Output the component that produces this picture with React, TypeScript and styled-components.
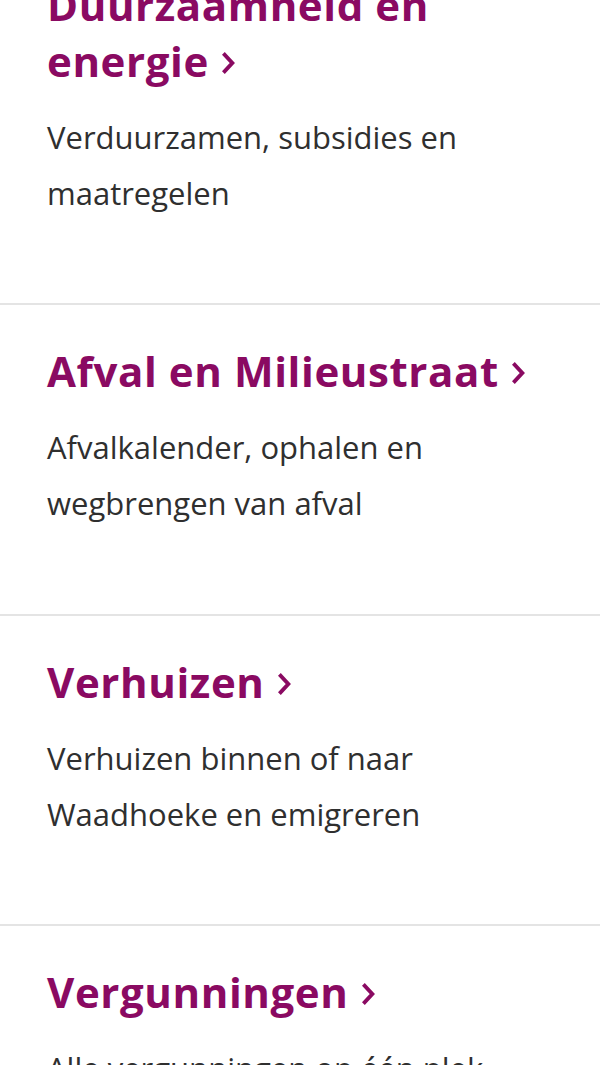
import * as React from 'react';
import styled, { createGlobalStyle } from 'styled-components';

interface Topic {
  title: string
  description: string
}

const topics: Topic[] = [
  { title: 'Duurzaamheid en energie', description: 'Verduurzamen, subsidies en maatregelen' },
  { title: 'Afval en Milieustraat', description: 'Afvalkalender, ophalen en wegbrengen van afval' },
  { title: 'Verhuizen', description: 'Verhuizen binnen of naar Waadhoeke en emigreren' },
  { title: 'Vergunningen', description: 'Alle vergunningen op één plek' },
];

const Chevron = () => (
  <ChevronIcon viewBox="0 0 12 20" aria-hidden="true">
    <path d="M2.5 2.5 L9.5 10 L2.5 17.5" />
  </ChevronIcon>
);

export default function App() {
  return (
    <>
      <GlobalStyle />
      <TopicList>
        {topics.map((t, i) => (
          <TopicItem key={`${t.title}_${i}`}>
            <TopicLink href="#">
              {t.title}
              <Nowrap>&nbsp;<Chevron /></Nowrap>
            </TopicLink>
            <Description>{t.description}</Description>
          </TopicItem>
        ))}
      </TopicList>
    </>
  );
}

const GlobalStyle = createGlobalStyle`
  html, body {
    margin: 0;
    padding: 0;
    background: #ffffff;
    overflow: hidden;
  }
  body {
    font-family: "Open Sans", "Noto Sans", sans-serif;
  }
`;

const TopicList = styled.ul`
  list-style: none;
  margin: -61.5px 0 0;
  padding: 0;
`;

const TopicItem = styled.li`
  padding: 38px 47px 82.5px;
  border-bottom: 2px solid #e4e4e4;
`;

const TopicLink = styled.a`
  display: block;
  margin: 0 0 20px;
  font-family: "Open Sans", "Noto Sans", sans-serif;
  font-weight: 700;
  font-size: 42px;
  line-height: 56px;
  letter-spacing: 0.6px;
  color: #8a0a62;
  text-decoration: none;
`;

const Nowrap = styled.span`
  white-space: nowrap;
`;

const ChevronIcon = styled.svg`
  width: 13px;
  height: 22px;
  margin-left: 2px;
  vertical-align: 3px;
  fill: none;
  stroke: #8a0a62;
  stroke-width: 3.6;
  stroke-linecap: square;
`;

const Description = styled.p`
  margin: 0;
  font-size: 31px;
  line-height: 56px;
  color: #2f2f2f;
`;
